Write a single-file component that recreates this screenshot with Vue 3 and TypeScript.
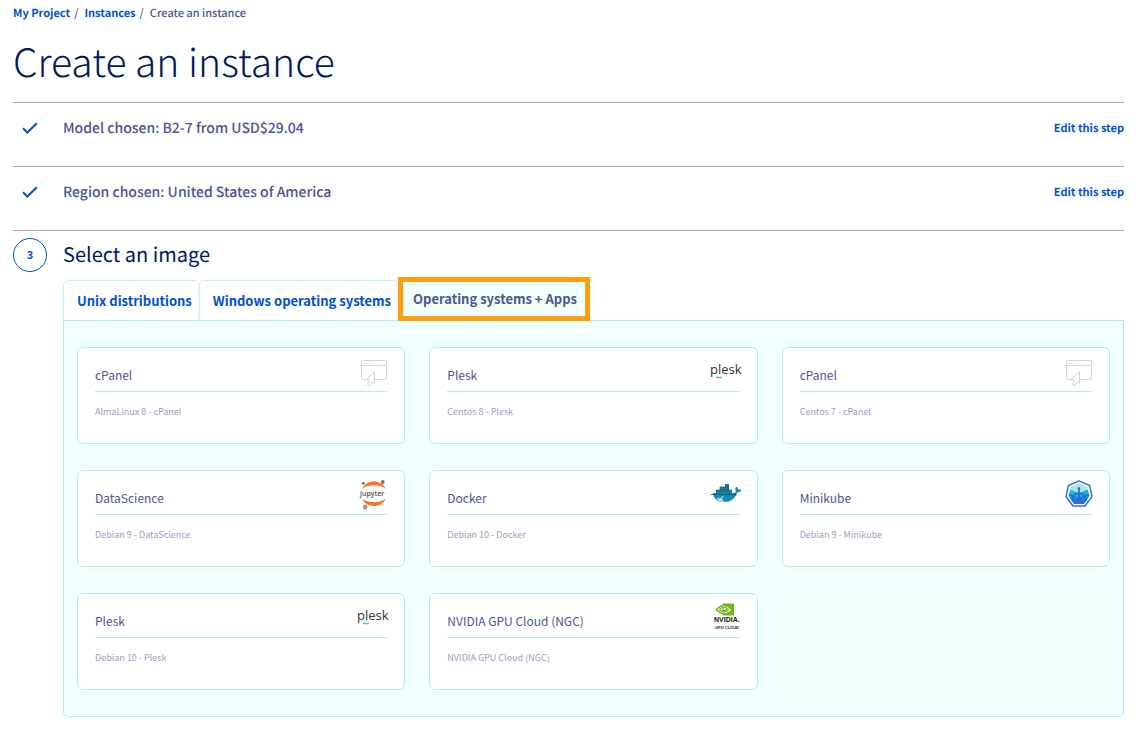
<script setup lang="ts">
import { ref } from 'vue'

type Logo = 'cpanel' | 'plesk' | 'jupyter' | 'docker' | 'minikube' | 'nvidia'

interface Image {
  name: string
  version: string
  logo: Logo
}

const steps: string[] = [
  'Model chosen: B2-7 from USD$29.04',
  'Region chosen: United States of America',
]

const tabs: string[] = ['Unix distributions', 'Windows operating systems', 'Operating systems + Apps']
const activeTab = ref(2)

const images: Image[] = [
  { name: 'cPanel', version: 'AlmaLinux 8 - cPanel', logo: 'cpanel' },
  { name: 'Plesk', version: 'Centos 8 - Plesk', logo: 'plesk' },
  { name: 'cPanel', version: 'Centos 7 - cPanel', logo: 'cpanel' },
  { name: 'DataScience', version: 'Debian 9 - DataScience', logo: 'jupyter' },
  { name: 'Docker', version: 'Debian 10 - Docker', logo: 'docker' },
  { name: 'Minikube', version: 'Debian 9 - Minikube', logo: 'minikube' },
  { name: 'Plesk', version: 'Debian 10 - Plesk', logo: 'plesk' },
  { name: 'NVIDIA GPU Cloud (NGC)', version: 'NVIDIA GPU Cloud (NGC)', logo: 'nvidia' },
]
</script>

<template>
  <main class="page">
    <nav class="breadcrumb" aria-label="Breadcrumb">
      <a href="#project">My Project</a><span class="slash">/</span>
      <a href="#instances">Instances</a><span class="slash">/</span>
      <span>Create an instance</span>
    </nav>
    <h1>Create an instance</h1>

    <section v-for="step in steps" :key="step" class="step done">
      <svg class="check" viewBox="0 0 16 12" aria-hidden="true">
        <path d="M1 6.2 5.3 10.5 14.8 1.2" fill="none" stroke="#0050d7" stroke-width="2" />
      </svg>
      <h2 class="summary">{{ step }}</h2>
      <a class="edit" href="#edit">Edit this step</a>
    </section>

    <section class="step current">
      <span class="number">3</span>
      <h2 class="heading">Select an image</h2>
    </section>

    <div class="chooser">
      <div class="tabs" role="tablist">
        <button
          v-for="(tab, i) in tabs"
          :key="tab"
          type="button"
          role="tab"
          class="tab"
          :class="{ active: i === activeTab }"
          :aria-selected="i === activeTab"
          @click="activeTab = i"
        >{{ tab }}</button>
      </div>

      <div class="panel" role="tabpanel">
        <button v-for="image in images" :key="image.version" type="button" class="card">
          <span class="card-head">
            <span class="name">{{ image.name }}</span>
            <svg v-if="image.logo === 'cpanel'" class="logo" viewBox="0 0 32 32" aria-hidden="true">
              <g fill="none" stroke="#d2d2d2" stroke-width="1">
                <path d="M9 22.500H5.500a2 2 0 0 1-2-2V5.500a2 2 0 0 1 2-2h21a2 2 0 0 1 2 2v15a2 2 0 0 1-2 2H17" />
                <path d="M3.500 8.500h25" />
                <path d="M5.500 6.500h1M8 6.500h1M10.500 6.500h1" />
                <path d="M16.500 14.500 8.500 22.500l3 .5-2 4.500 2.500 1.200 2-4.200 2.500 2z" />
              </g>
            </svg>
            <svg v-else-if="image.logo === 'plesk'" class="logo wide" viewBox="0 0 34 32" aria-hidden="true">
              <text x="1" y="17" class="plesk" fill="#333">plesk</text>
              <path d="M7 20.500h6" stroke="#52bbe6" stroke-width="1.500" />
            </svg>
            <svg v-else-if="image.logo === 'jupyter'" class="logo" viewBox="0 1 32 32" aria-hidden="true">
              <path d="M4.500 10C7 0 25 0 27.500 10 23 5 9 5 4.500 10Z" fill="#f37726" />
              <path d="M4.500 19.500C7 29.500 25 29.500 27.500 19.500 23 24.500 9 24.500 4.500 19.500Z" fill="#f37726" />
              <circle cx="5.300" cy="4.300" r="1.400" fill="#616262" />
              <circle cx="24.700" cy="3" r="1.900" fill="#767677" />
              <circle cx="7.200" cy="28" r="2.400" fill="#989798" />
              <text x="2" y="16.500" class="jupyter" fill="#4e4e4e">jupyter</text>
            </svg>
            <svg v-else-if="image.logo === 'docker'" class="logo wide" viewBox="0 1 34 32" aria-hidden="true">
              <path d="M7 14v-3h4V8h5V5h4v6h3v4H7z" fill="#207b91" />
              <path d="M11 8v6M15 8v6M19 5v9M7 11h16M11 8h8" stroke="#155a6c" stroke-width=".6" />
              <path d="M4 14h20.500c1.700 0 2.500-1 2.300-2.300-.9-1.400-.5-2.900.6-3.900 1.300.8 1.800 1.900 1.700 2.900 1-.5 2.500-.4 3.500.2-.8 1.700-2.300 2.400-4.200 2.400C26.200 20 21.700 23 15 23 8.500 23 4.500 20 4 14Z" fill="#1489b5" />
              <path d="M7 19c3 .8 5 .2 6-.8-.2 2 .8 4 3 4.800-4 .3-7-1.200-9-4Z" fill="#c4dce5" />
              <circle cx="13.500" cy="18" r=".8" fill="#fff" />
              <path d="M2 15.500h6M9 15.500h6M16 15.500h6M23 15.500h4" stroke="#164d60" stroke-width=".9" />
            </svg>
            <svg v-else-if="image.logo === 'minikube'" class="logo" viewBox="0 1 32 32" aria-hidden="true">
              <path d="M16 1.800 26.500 6.500 29 17.500 22 27H10L3 17.500 5.500 6.500Z" fill="#fff" stroke="#326de6" stroke-width="1.400" stroke-linejoin="round" />
              <path d="m16 4 8.600 4.200v3L16 15l-8.600-3.800v-3Z" fill="#aee4e6" />
              <path d="M7.200 10.500 16 14v10.500h-5L5.500 17Z" fill="#12c4ce" />
              <path d="M24.800 10.500 16 14v10.500h5l5.500-7.500Z" fill="#16b1cd" />
              <path d="M6.500 18.500 11 25h10l4.500-6.500C23 20.500 9 20.500 6.500 18.500Z" fill="#326de6" />
              <path d="M16 9v13M9.500 21c-2-9 15-9 13 0M6 15.500l10 4.500 10-4.500" fill="none" stroke="#236bd7" stroke-width="1.700" />
              <circle cx="16" cy="9.500" r="1.300" fill="#236bd7" />
            </svg>
            <svg v-else class="logo" viewBox="0 1 32 32" aria-hidden="true">
              <path d="M11.500 1.500H23V13.500H11.500z" fill="#74b71b" />
              <path d="M5.500 7.500C10 2 16.500 2 21 8 16.500 13 10 13 5.500 7.500Z" fill="#fff" stroke="#74b71b" stroke-width="1.400" />
              <path d="M8.500 7.500c3-3.500 6.500-3 9 0-3 3.500-6 3-9 0Z" fill="#fff" stroke="#74b71b" stroke-width="1.300" />
              <path d="M12 6v2.500c1.500 1 2.500 0 3.500-1.500" fill="none" stroke="#5da510" stroke-width="1.200" />
              <text x="3" y="20" class="nvidia" fill="#111">NVIDIA.</text>
              <text x="4" y="26.500" class="cloud" fill="#222">GPU CLOUD</text>
            </svg>
          </span>
          <span class="version">{{ image.version }}</span>
        </button>
      </div>
    </div>
  </main>
</template>

<style>
body {
  margin: 0;
  background: #fff;
}
</style>

<style scoped>
.page {
  box-sizing: border-box;
  padding: 4px 16px 17px 13px;
  font-family: "Noto Sans CJK SC", "Noto Sans", sans-serif;
  font-size: 11px;
  color: #4d5592;
  text-rendering: geometricPrecision;
}

a {
  color: #0050d7;
  font-weight: 700;
  text-decoration: none;
}

.breadcrumb {
  display: flex;
  font-weight: 500;
  line-height: 18px;
}

.slash {
  margin: 0 6px 0 4px;
}

h1 {
  margin: 15px 0 16px;
  font-size: 39px;
  font-weight: 300;
  line-height: 49px;
  color: #00185e;
}

.step {
  display: grid;
  grid-template-columns: 34px 1fr auto;
  column-gap: 16px;
  align-items: center;
  border-top: 1px solid #aaa;
}

.done {
  padding: 13px 0 26px;
}

.check {
  width: 16px;
  height: 12px;
  justify-self: center;
}

.summary {
  margin: 0;
  font-size: 14px;
  font-weight: 500;
  line-height: 24px;
}

.edit {
  line-height: 18px;
}

.current {
  padding: 7px 0 8px;
}

.number {
  box-sizing: border-box;
  width: 34px;
  height: 34px;
  border: 1px solid #0050d7;
  border-radius: 50%;
  color: #0050d7;
  font-weight: 700;
  line-height: 32px;
  text-align: center;
}

.heading {
  margin: 0;
  padding-bottom: 2px;
  font-size: 20px;
  font-weight: 400;
  line-height: 32px;
  color: #00185e;
}

.chooser {
  margin-left: 50px;
}

.tabs {
  display: flex;
  align-items: flex-end;
  height: 40px;
}

.tab {
  box-sizing: border-box;
  height: 40px;
  padding: 0 7px 0 13px;
  border: 1px solid #bef1ff;
  border-right: 0;
  border-bottom: 0;
  border-radius: 5px 5px 0 0;
  background: #fff;
  color: #0050d7;
  font: inherit;
  font-size: 13px;
  font-weight: 700;
  line-height: 20px;
  white-space: nowrap;
}

.tab.active {
  position: relative;
  height: 44px;
  margin-bottom: -1px;
  padding: 0 8px 0 10px;
  border: 5px solid #ff9d0a;
  border-radius: 0;
  background: #f2ffff;
  color: #4d5592;
}

.panel {
  display: grid;
  grid-template-columns: repeat(3, 1fr);
  gap: 26px 24px;
  padding: 26px 13px;
  border: 1px solid #abedf9;
  border-radius: 0 0 5px 5px;
  background: #f2ffff;
}

.card {
  display: flex;
  flex-direction: column;
  box-sizing: border-box;
  height: 97px;
  padding: 8px 17px;
  border: 1px solid #abedf9;
  border-radius: 6px;
  background: #fff;
  color: #4d5592;
  font: inherit;
  text-align: left;
}

.card-head {
  display: flex;
  justify-content: space-between;
  align-items: flex-end;
  width: 100%;
  height: 35px;
  border-bottom: 1px solid #abedf9;
}

.name {
  padding-bottom: 7px;
  font-size: 12px;
  line-height: 18px;
}

.logo {
  width: 32px;
  height: 32px;
  margin: 0 -3px 2px 0;
}

.logo.wide {
  width: 34px;
}

.version {
  margin-top: 13px;
  font-size: 9px;
  line-height: 14px;
  color: #999dc2;
}

.plesk {
  font: 500 13px "Open Sans", sans-serif;
}

.jupyter {
  font: 600 7px "Open Sans", sans-serif;
}

.nvidia {
  font: 700 7px "Liberation Sans", sans-serif;
}

.cloud {
  font: 700 4px "Liberation Sans", sans-serif;
}
</style>
